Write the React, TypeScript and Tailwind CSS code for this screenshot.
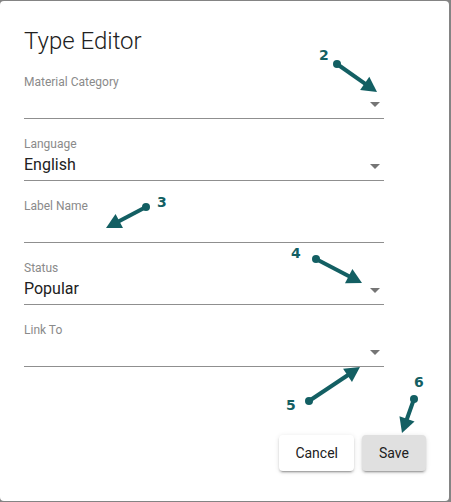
const FIELDS: { label: string; value?: string; select: boolean }[] = [
  { label: "Material Category", select: true },
  { label: "Language", value: "English", select: true },
  { label: "Label Name", select: false },
  { label: "Status", value: "Popular", select: true },
  { label: "Link To", select: true },
];

// annotation arrows: dot -> tip, in page coords
const ARROWS = [
  { n: "2", nx: 319, ny: 60, d: [337, 64], t: [377, 92] },
  { n: "3", nx: 157, ny: 207, d: [146, 207], t: [106, 228] },
  { n: "4", nx: 291, ny: 258, d: [316, 259], t: [362, 283] },
  { n: "5", nx: 286, ny: 410, d: [309, 401], t: [360, 367] },
  { n: "6", nx: 414, ny: 387, d: [414, 399], t: [402, 433] },
];

function Arrow({ d, t }: { d: number[]; t: number[] }) {
  const dx = t[0] - d[0];
  const dy = t[1] - d[1];
  const len = Math.hypot(dx, dy);
  const ux = dx / len;
  const uy = dy / len;
  const hl = 15;
  const hw = 8;
  const bx = t[0] - ux * hl;
  const by = t[1] - uy * hl;
  const pts = `${t[0]},${t[1]} ${bx - uy * hw},${by + ux * hw} ${bx + uy * hw},${by - ux * hw}`;
  return (
    <g fill="#135f63" stroke="#135f63">
      <line x1={d[0]} y1={d[1]} x2={bx + ux * 2} y2={by + uy * 2} strokeWidth={4} />
      <circle cx={d[0]} cy={d[1]} r={4} stroke="none" />
      <polygon points={pts} stroke="none" />
    </g>
  );
}

function Field({ label, value, select }: { label: string; value?: string; select: boolean }) {
  return (
    <div className="w-[360px]">
      <div className="pt-[2px] text-[12px] leading-[12px] text-[#8a8a8a]">{label}</div>
      <div className="relative h-[31px] pt-[5px] text-[16px] leading-[19px] text-[#212121] border-b border-[#8f8f8f]">
        {value ?? ""}
        {select && (
          <svg className="absolute right-[4px] top-[14px]" width="10" height="5" viewBox="0 0 10 5">
            <path d="M0 0l5 5 5-5z" fill="#757575" />
          </svg>
        )}
      </div>
    </div>
  );
}

export default function App() {
  return (
    <div className="relative w-[451px] h-[502px] bg-[#848484] overflow-hidden" style={{ fontFamily: "Roboto, 'Liberation Sans', sans-serif" }}>
      <div className="mt-px w-[449px] h-[500px] rounded-[4px] bg-white pt-[24px] pl-[24px]">
        <h2 className="text-[24px] leading-[32px] font-light text-[#212121]">Type Editor</h2>
        <div className="mt-[17px] flex flex-col gap-[17px]">
          {FIELDS.map((f) => (
            <Field key={f.label} {...f} />
          ))}
        </div>
        <div className="mt-[68px] flex justify-end gap-2 pr-[23px]">
          <button
            type="button"
            className="h-[36px] min-w-[64px] px-4 rounded-[4px] bg-white text-[14px] font-normal text-[#212121] shadow-[0_3px_1px_-2px_rgba(0,0,0,0.2),0_2px_2px_0_rgba(0,0,0,0.14),0_1px_5px_0_rgba(0,0,0,0.12)]"
          >
            Cancel
          </button>
          <button
            type="button"
            className="h-[36px] min-w-[64px] px-4 rounded-[4px] bg-[#e0e0e0] text-[14px] font-normal text-[#212121] shadow-[0_3px_1px_-2px_rgba(0,0,0,0.2),0_2px_2px_0_rgba(0,0,0,0.14),0_1px_5px_0_rgba(0,0,0,0.12)]"
          >
            Save
          </button>
        </div>
      </div>

      <svg className="absolute inset-0 pointer-events-none" width="451" height="502">
        {ARROWS.map((a) => (
          <g key={a.n}>
            <Arrow d={a.d} t={a.t} />
            <text x={a.nx} y={a.ny} fill="#135f63" fontSize="14" fontWeight="bold" fontFamily="'DejaVu Sans', Verdana, sans-serif">
              {a.n}
            </text>
          </g>
        ))}
      </svg>
    </div>
  );
}
